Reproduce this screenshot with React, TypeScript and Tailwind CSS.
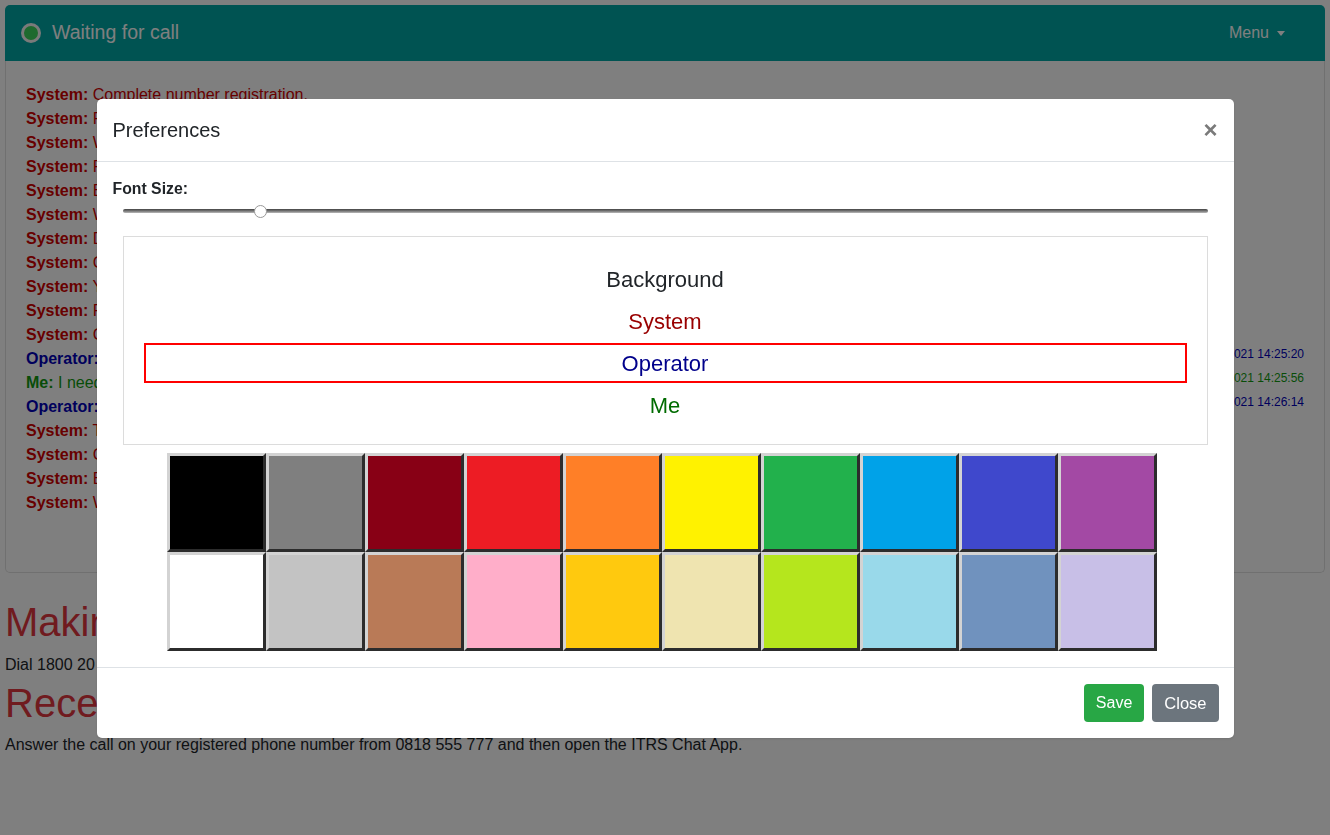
import React, { useState } from "react";

type Line = { who: "System" | "Operator" | "Me"; text: string; time?: string };

const lines: Line[] = [
  { who: "System", text: "Complete number registration." },
  { who: "System", text: "Registering your phone number, please wait..." },
  { who: "System", text: "Waiting for the operator to answer." },
  { who: "System", text: "Please keep this window open during the call." },
  { who: "System", text: "Enter your message in the box below." },
  { who: "System", text: "Waiting for call." },
  { who: "System", text: "Dialling the relay service." },
  { who: "System", text: "Connecting to an operator." },
  { who: "System", text: "You are now connected." },
  { who: "System", text: "Please type your message." },
  { who: "System", text: "Call answered by operator." },
  { who: "Operator", text: "Hello, how can I help you today?", time: "12/05/2021 14:25:20" },
  { who: "Me", text: "I need to make a call to my doctor please.", time: "12/05/2021 14:25:56" },
  { who: "Operator", text: "Sure, connecting you now.", time: "12/05/2021 14:26:14" },
  { who: "System", text: "The call has ended." },
  { who: "System", text: "Call disconnected." },
  { who: "System", text: "Ending session." },
  { who: "System", text: "Waiting for call." },
];

const whoColor: Record<Line["who"], string> = {
  System: "text-[#d00000]",
  Operator: "text-[#0000b8]",
  Me: "text-[#109a10]",
};

const palette = [
  "bg-[#000000]", "bg-[#7f7f7f]", "bg-[#880015]", "bg-[#ed1c24]", "bg-[#ff7f27]",
  "bg-[#fff200]", "bg-[#22b14c]", "bg-[#00a2e8]", "bg-[#3f48cc]", "bg-[#a349a4]",
  "bg-[#ffffff]", "bg-[#c3c3c3]", "bg-[#b97a57]", "bg-[#ffaec9]", "bg-[#ffc90e]",
  "bg-[#efe4b0]", "bg-[#b5e61d]", "bg-[#99d9ea]", "bg-[#7092be]", "bg-[#c8bfe7]",
];

const previewItems = [
  { label: "Background", cls: "text-[#212529]" },
  { label: "System", cls: "text-[#990000]" },
  { label: "Operator", cls: "text-[#00008b]" },
  { label: "Me", cls: "text-[#006b00]" },
];

const App: React.FC = () => {
  const [selected, setSelected] = useState("Operator");

  return (
    <div className="relative min-h-screen bg-white p-[5px] text-[#212529]" style={{ fontFamily: '"Liberation Sans", Arial, sans-serif' }}>
      {/* navbar */}
      <div className="flex h-[56px] items-center justify-between rounded-t-[5px] bg-[#00a6a4] pl-[16px] pr-[40px]">
        <div className="flex items-center gap-[11px]">
          <span className="h-[20px] w-[20px] rounded-full border-[3px] border-[#f4f4f4] bg-[#3dd45c]" />
          <span className="text-[19.5px] text-white">Waiting for call</span>
        </div>
        <div className="flex items-center gap-[8px] text-[16px] text-white">
          Menu
          <span className="h-0 w-0 border-x-[4.5px] border-t-[5px] border-x-transparent border-t-white" />
        </div>
      </div>

      {/* chat card */}
      <div className="h-[512px] rounded-b-[5px] border border-t-0 border-[#e0e0e0] px-[20px] pt-[22px]">
        {lines.map((l, i) => (
          <div key={i} className="flex h-[24px] items-center justify-between text-[16px]">
            <span className={whoColor[l.who]}>
              <b>{l.who}:</b> {l.text}
            </span>
            {l.time && <span className={`self-start text-[12px] leading-[14px] ${whoColor[l.who]}`}>{l.time}</span>}
          </div>
        ))}
      </div>

      <h1 className="mt-[25px] text-[40px] leading-[48px] font-medium text-[#e0363f]">Making a call</h1>
      <p className="mt-[7px] text-[16px] leading-[24px]">Dial 1800 20 20 20 from your registered phone number and then open the ITRS Chat App.</p>
      <h1 className="mt-[2px] text-[40px] leading-[48px] font-medium text-[#e0363f]">Receiving a call</h1>
      <p className="mt-[6px] text-[16px] leading-[24px]">
        Answer the call on your registered phone number from 0818 555 777 and then open the ITRS Chat App.
      </p>

      {/* backdrop + modal */}
      <div className="fixed inset-0 flex justify-center bg-black/50 pt-[99px]">
        <div className="h-fit w-[1137px] rounded-[5px] bg-white shadow">
          <div className="flex items-center justify-between border-b border-[#dee2e6] px-[16px] py-[16px]">
            <span className="text-[20px] leading-[30px]">Preferences</span>
            <span className="text-[24px] leading-none font-bold text-[#7a7a7a]">×</span>
          </div>

          <div className="p-[16px]">
            <div className="text-[15.8px] leading-[22px] font-bold">Font Size:</div>
            <div className="relative mx-[10px] flex h-[22px] items-center">
              <div className="h-[4px] w-full rounded-full bg-gradient-to-b from-[#444] via-[#777] to-[#bbb]" />
              <span className="absolute left-[131px] top-[5px] h-[13px] w-[13px] rounded-full border border-[#9a9a9a] bg-white" />
            </div>

            <div className="mx-[10px] mt-[14px] flex flex-col gap-[2px] border border-[#dcdcdc] px-[20px] pt-[22px] pb-[19px]">
              {previewItems.map((p) => (
                <div
                  key={p.label}
                  onClick={() => setSelected(p.label)}
                  className={`flex h-[40px] items-center justify-center border-2 text-[22px] ${p.cls} ${
                    selected === p.label ? "border-[#ff0000]" : "border-transparent"
                  }`}
                >
                  {p.label}
                </div>
              ))}
            </div>

            <div className="mx-auto mt-[8px] grid w-[990px] grid-cols-10 -translate-x-[3px]">
              {palette.map((c, i) => (
                <div
                  key={i}
                  className={`h-[99px] border-[3px] border-t-[#d3d3d3] border-l-[#d3d3d3] border-r-[#2c2c2c] border-b-[#2c2c2c] ${c}`}
                />
              ))}
            </div>
          </div>

          <div className="flex justify-end gap-[8px] border-t border-[#dee2e6] px-[15px] py-[16px]">
            <button className="h-[38px] rounded-[4px] bg-[#28a745] px-[12px] text-[16px] text-white">Save</button>
            <button className="h-[38px] rounded-[4px] bg-[#6c757d] px-[12px] text-[16.5px] text-white">Close</button>
          </div>
        </div>
      </div>
    </div>
  );
};

export default App;
